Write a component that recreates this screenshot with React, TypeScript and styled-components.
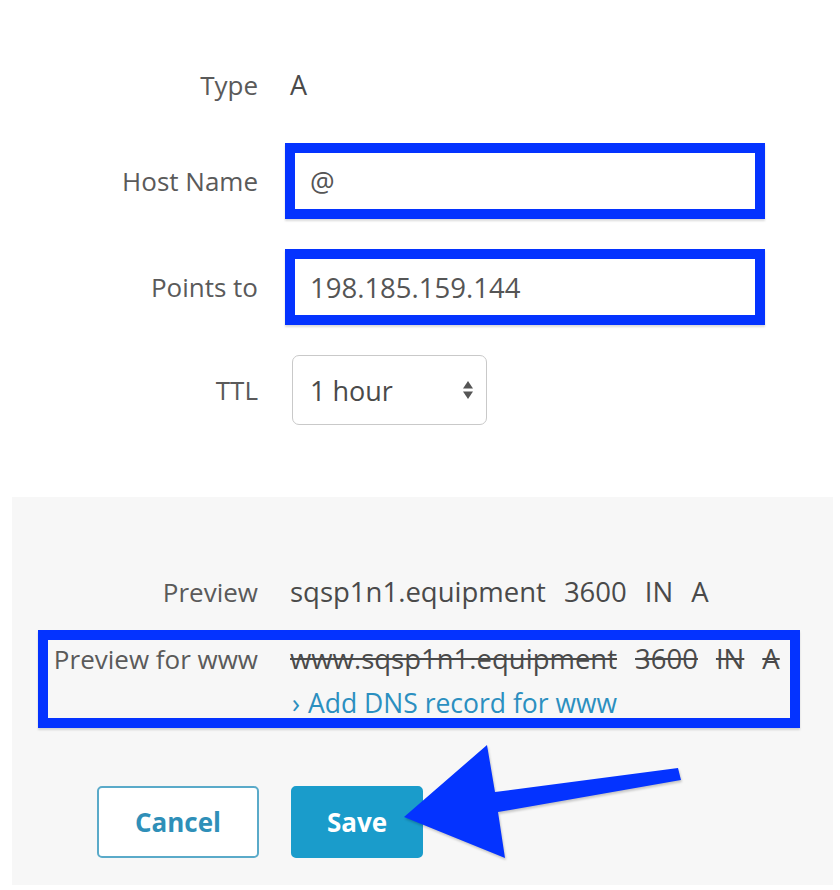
import React from "react";
import styled, { createGlobalStyle } from "styled-components";

const GlobalStyle = createGlobalStyle`
  html, body {
    margin: 0;
    padding: 0;
    background: #ffffff;
  }
  body {
    font-family: "Open Sans", "Liberation Sans", Arial, sans-serif;
  }
`;

const Page = styled.div`
  position: relative;
  width: 840px;
  height: 890px;
  overflow: hidden;
  background: #ffffff;
`;

const Form = styled.div`
  display: grid;
  grid-template-columns: 258px 1fr;
  grid-template-rows: 56px 76px 76px 70px;
  column-gap: 32px;
  row-gap: 30px;
  align-items: center;
  padding-top: 57px;
`;

const Label = styled.div`
  text-align: right;
  font-size: 26px;
  color: #5a5a5a;
  line-height: 34px;
  white-space: nowrap;
`;

const Value = styled.div`
  font-size: 27px;
  color: #4a4a4a;
  line-height: 34px;
`;

const TextInput = styled.input`
  box-sizing: border-box;
  width: 480px;
  height: 76px;
  margin-left: -5px;
  border: 10px solid #0433ff;
  padding: 0 15px;
  font-family: inherit;
  font-size: 27.5px;
  color: #555555;
  background: #ffffff;
  outline: none;
  box-shadow: 0 2px 2px rgba(0, 0, 0, 0.15);
`;

const SelectBox = styled.div`
  box-sizing: border-box;
  width: 195px;
  height: 70px;
  margin-left: 2px;
  border: 1.5px solid #c9c9c9;
  border-radius: 7px;
  display: flex;
  align-items: center;
  justify-content: space-between;
  padding: 0 12px 0 17px;
  font-size: 27px;
  color: #4a4a4a;
  background: #ffffff;
`;

const Panel = styled.div`
  box-sizing: border-box;
  margin: 72px 0 0 12px;
  width: 821px;
  height: 388px;
  background: #f7f7f7;
  padding-top: 78px;
`;

const PreviewRow = styled.div`
  display: grid;
  grid-template-columns: 246px 1fr;
  column-gap: 32px;
`;

const WwwBox = styled.div`
  box-sizing: border-box;
  margin: 21px 0 0 26px;
  width: 762px;
  height: 98px;
  border: 10px solid #0433ff;
  padding-top: 2px;
  display: grid;
  grid-template-columns: 210px 1fr;
  column-gap: 32px;
  box-shadow: 0 2px 2px rgba(0, 0, 0, 0.15);
`;

const Record = styled.span<{ $struck?: boolean }>`
  font-size: 27.5px;
  color: #4a4a4a;
  line-height: 34px;
  margin-right: 18px;
  white-space: nowrap;
  text-decoration: ${(p) => (p.$struck ? "line-through" : "none")};
  &:last-child {
    margin-right: 0;
  }
`;

const AddLink = styled.a`
  display: block;
  margin-top: 13px;
  font-size: 26.5px;
  line-height: 28px;
  color: #2b8fc0;
  text-decoration: none;
  white-space: nowrap;
`;

const Chevron = styled.span`
  margin: 0 8px 0 2px;
`;

const Buttons = styled.div`
  display: flex;
  gap: 32px;
  margin-top: 58px;
  padding-left: 85px;
`;

const Button = styled.button<{ $primary?: boolean }>`
  box-sizing: border-box;
  height: 72px;
  width: ${(p) => (p.$primary ? "132px" : "162px")};
  border-radius: 5px;
  border: 2px solid ${(p) => (p.$primary ? "#1a9ccb" : "#5aaac9")};
  background: ${(p) => (p.$primary ? "#1a9ccb" : "#ffffff")};
  color: ${(p) => (p.$primary ? "#ffffff" : "#2f8fb8")};
  font-family: inherit;
  font-size: 26px;
  font-weight: 700;
  cursor: pointer;
`;

const Arrow = styled.svg`
  position: absolute;
  left: 400px;
  top: 740px;
  width: 290px;
  height: 125px;
  filter: drop-shadow(1px 2px 1px rgba(0, 0, 0, 0.2));
  pointer-events: none;
`;

function SortArrows() {
  return (
    <svg width="12" height="20" viewBox="0 0 12 20">
      <path d="M6 1 L11 8.5 H1 Z" fill="#555" />
      <path d="M6 19 L11 11.5 H1 Z" fill="#555" />
    </svg>
  );
}

export default function App() {
  return (
    <Page>
      <GlobalStyle />
      <Form>
        <Label>Type</Label>
        <Value>A</Value>

        <Label>Host Name</Label>
        <TextInput defaultValue="@" />

        <Label>Points to</Label>
        <TextInput defaultValue="198.185.159.144" />

        <Label>TTL</Label>
        <SelectBox>
          <span>1 hour</span>
          <SortArrows />
        </SelectBox>
      </Form>

      <Panel>
        <PreviewRow>
          <Label>Preview</Label>
          <div>
            <Record>sqsp1n1.equipment</Record>
            <Record>3600</Record>
            <Record>IN</Record>
            <Record>A</Record>
          </div>
        </PreviewRow>

        <WwwBox>
          <Label>Preview for www</Label>
          <div>
            <div>
              <Record $struck>www.sqsp1n1.equipment</Record>
              <Record $struck>3600</Record>
              <Record $struck>IN</Record>
              <Record $struck>A</Record>
            </div>
            <AddLink href="#">
              <Chevron>›</Chevron>Add DNS record for www
            </AddLink>
          </div>
        </WwwBox>

        <Buttons>
          <Button>Cancel</Button>
          <Button $primary>Save</Button>
        </Buttons>
      </Panel>

      <Arrow viewBox="400 740 290 125">
        <polygon
          points="404,817 487,745 495,792 678,768 681,780 498,812 505,858"
          fill="#0433ff"
        />
      </Arrow>
    </Page>
  );
}
